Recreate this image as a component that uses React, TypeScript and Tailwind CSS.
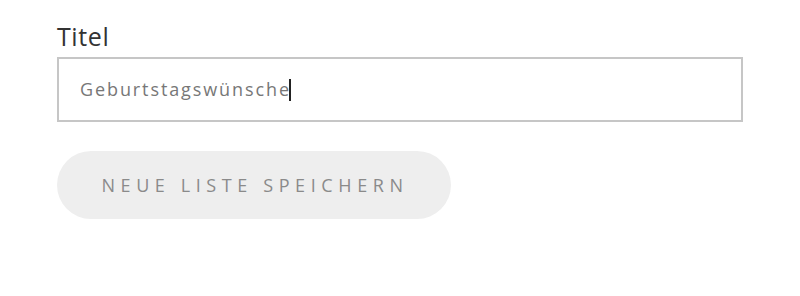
export default function App() {
  return (
    <div className="w-[800px] h-[296px] bg-white pl-[57px] pr-[57px] pt-[20px] font-['Open_Sans',sans-serif]">
      <label className="block text-[25px] leading-[32px] tracking-[0.6px] text-[#333]">Titel</label>
      <div className="mt-[5px] h-[65px] w-[686px] border-2 border-[#c6c6c6] flex items-center px-[21px]">
        <span className="text-[18px] tracking-[1.9px] text-[#777]">Geburtstagswünsche</span>
        <span className="-ml-[1.5px] w-[1.5px] h-[22px] bg-[#222]" />
      </div>
      <button className="mt-[29px] h-[68px] w-[394px] rounded-full bg-[#eeeeee] text-[#8a8a8a] text-[18px] tracking-[5.6px] pl-[2px] uppercase">
        Neue Liste speichern
      </button>
    </div>
  )
}
